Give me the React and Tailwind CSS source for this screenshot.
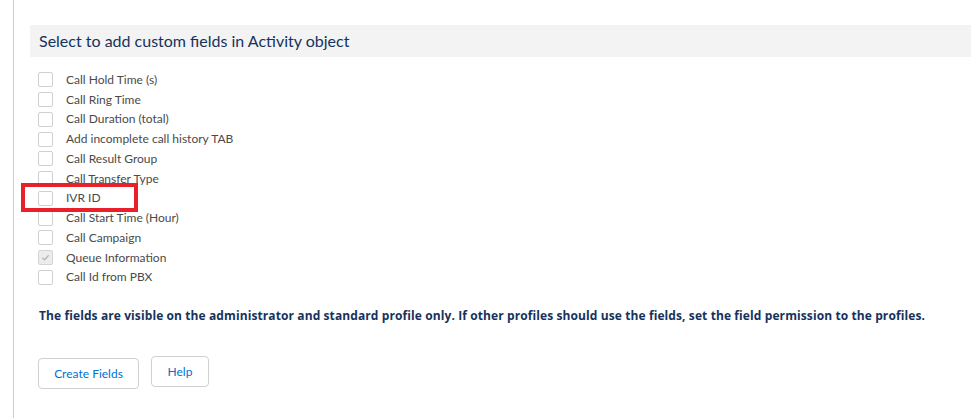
import React from "react";

const fields = [
  { label: "Call Hold Time (s)" },
  { label: "Call Ring Time" },
  { label: "Call Duration (total)" },
  { label: "Add incomplete call history TAB" },
  { label: "Call Result Group" },
  { label: "Call Transfer Type" },
  { label: "IVR ID", marked: true },
  { label: "Call Start Time (Hour)" },
  { label: "Call Campaign" },
  { label: "Queue Information", checked: true },
  { label: "Call Id from PBX" },
];

function Checkbox({ checked }) {
  if (checked) {
    return (
      <span className="w-[15px] h-[15px] rounded-[2px] border border-[#d4d4d4] bg-[#ececec] flex items-center justify-center">
        <svg width="9" height="9" viewBox="0 0 10 10">
          <path d="M1.5 5.2 L4 7.5 L8.5 2.5" fill="none" stroke="#b5b5b5" strokeWidth="1.4" />
        </svg>
      </span>
    );
  }
  return <span className="w-[15px] h-[15px] rounded-[2px] border border-[#d0d0d0] bg-white" />;
}

export default function App() {
  return (
    <div
      className="w-[971px] h-[418px] bg-white overflow-hidden pl-[13px]"
      style={{ fontFamily: "Lato, 'Open Sans', sans-serif" }}
    >
      <div className="h-full border-l border-[#cfcfcf] pl-[16px] pt-[25px]">
        {/* Section header */}
        <div className="h-[32px] bg-[#f3f3f3] flex items-center pl-[9px]">
          <h2 className="text-[16px] text-[#16325c]">Select to add custom fields in Activity object</h2>
        </div>

        {/* Field list */}
        <div className="relative mt-[13px] pl-[8px]">
          {fields.map((f) => (
            <div key={f.label} className="h-[19.75px] flex items-center">
              <Checkbox checked={f.checked} />
              <span className="ml-[13px] text-[12px] text-[#4a4a4a]">{f.label}</span>
            </div>
          ))}
          {/* annotation box */}
          <div className="absolute left-[-9px] top-[113px] w-[117px] h-[29px] border-[4px] border-[#e8202a]" />
        </div>

        <p className="mt-[20px] pl-[9px] text-[12px] font-bold text-[#16325c] font-['Open_Sans'] tracking-[0.1px]">
          The fields are visible on the administrator and standard profile only. If other profiles should use the
          fields, set the field permission to the profiles.
        </p>

        <div className="mt-[31px] pl-[8px] flex items-start gap-[12px]">
          <button className="mt-[2px] h-[31px] w-[101px] rounded-[4px] border border-[#d0d0d0] bg-white text-[12px] text-[#0070d2]">
            Create Fields
          </button>
          <button className="h-[31px] w-[58px] rounded-[4px] border border-[#d0d0d0] bg-white text-[12px] text-[#0070d2]">
            Help
          </button>
        </div>
      </div>
    </div>
  );
}
